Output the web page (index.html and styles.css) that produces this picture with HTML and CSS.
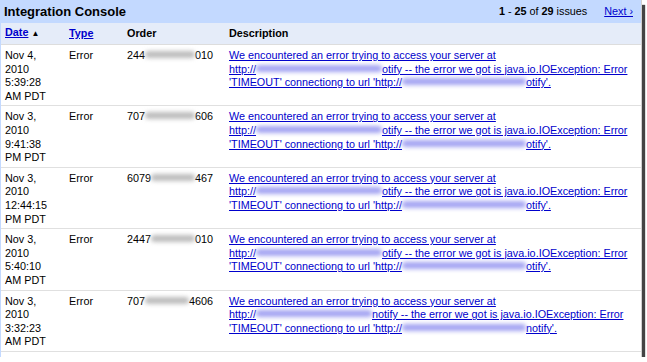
FILE: index.html
```html
<!DOCTYPE html>
<html>
<head>
<meta charset="utf-8">
<link rel="stylesheet" href="styles.css">
</head>
<body>
<div class="frame">
  <div class="titlebar">
    <div class="title">Integration Console</div>
    <div class="pager"><b>1</b> - <b>25</b> of <b>29</b> issues <a class="next" href="#">Next ›</a></div>
  </div>
  <table class="issues">
    <colgroup>
      <col class="c-date"><col class="c-type"><col class="c-order"><col class="c-desc">
    </colgroup>
    <thead>
      <tr>
        <th><a href="#">Date</a> <span class="arrow">▲</span></th>
        <th><a href="#">Type</a></th>
        <th>Order</th>
        <th>Description</th>
      </tr>
    </thead>
    <tbody>
      <tr>
        <td>Nov 4,<br>2010<br>5:39:28<br>AM PDT</td>
        <td>Error</td>
        <td>244<span class="blur-g"></span>010</td>
        <td><a href="#">We encountered an error trying to access your server at<br>http://<span class="blur-b w1"></span>otify -- the error we got is java.io.IOException: Error<br>'TIMEOUT' connectiong to url 'http://<span class="blur-b w2"></span>otify'.</a></td>
      </tr>
      <tr>
        <td>Nov 3,<br>2010<br>9:41:38<br>PM PDT</td>
        <td>Error</td>
        <td>707<span class="blur-g"></span>606</td>
        <td><a href="#">We encountered an error trying to access your server at<br>http://<span class="blur-b w1"></span>otify -- the error we got is java.io.IOException: Error<br>'TIMEOUT' connectiong to url 'http://<span class="blur-b w2"></span>otify'.</a></td>
      </tr>
      <tr>
        <td>Nov 3,<br>2010<br>12:44:15<br>PM PDT</td>
        <td>Error</td>
        <td>6079<span class="blur-g s"></span>467</td>
        <td><a href="#">We encountered an error trying to access your server at<br>http://<span class="blur-b w1"></span>otify -- the error we got is java.io.IOException: Error<br>'TIMEOUT' connectiong to url 'http://<span class="blur-b w2"></span>otify'.</a></td>
      </tr>
      <tr>
        <td>Nov 3,<br>2010<br>5:40:10<br>AM PDT</td>
        <td>Error</td>
        <td>2447<span class="blur-g s"></span>010</td>
        <td><a href="#">We encountered an error trying to access your server at<br>http://<span class="blur-b w1"></span>otify -- the error we got is java.io.IOException: Error<br>'TIMEOUT' connectiong to url 'http://<span class="blur-b w2"></span>otify'.</a></td>
      </tr>
      <tr>
        <td>Nov 3,<br>2010<br>3:32:23<br>AM PDT</td>
        <td>Error</td>
        <td>707<span class="blur-g s"></span>4606</td>
        <td><a href="#">We encountered an error trying to access your server at<br>http://<span class="blur-b w3"></span>notify -- the error we got is java.io.IOException: Error<br>'TIMEOUT' connectiong to url 'http://<span class="blur-b w2"></span>notify'.</a></td>
      </tr>
    </tbody>
  </table>
</div>
</body>
</html>
```
FILE: styles.css
```css
html, body {
  margin: 0;
  padding: 0;
  background: #ffffff;
}
body {
  font-family: Arial, "Liberation Sans", sans-serif;
  font-size: 10.8px;
  line-height: 13.6px;
  color: #000;
}
.frame {
  width: 642px;
  height: 357px;
  border-left: 1px solid #c3d9ff;
  border-right: 1px solid #d0d0d0;
  box-sizing: border-box;
  box-shadow: 4px 4px 1px -1px #444;
  background: #fff;
}
.titlebar {
  display: flex;
  align-items: center;
  justify-content: space-between;
  height: 23px;
  background: #c3d9ff;
  padding: 0 8px 0 3px;
}
.title {
  font-size: 13px;
  font-weight: bold;
}
.pager {
  font-size: 10.8px;
}
.next {
  margin-left: 14px;
}
a { color: #0000cc; }
.issues {
  width: 100%;
  border-collapse: collapse;
  table-layout: fixed;
}
.c-date { width: 64px; }
.c-type { width: 58px; }
.c-order { width: 102px; }
.issues th {
  background: #e5ecf9;
  text-align: left;
  font-weight: bold;
  height: 21px;
  padding: 0 0 0 4px;
  border-bottom: 1px solid #dddddd;
  vertical-align: middle;
}
.arrow {
  font-size: 8px;
}
.issues td {
  vertical-align: top;
  padding: 4px 0 2px 4px;
  border-bottom: 1px solid #e0e0e0;
  height: 54px;
  white-space: nowrap;
}
.blur-g, .blur-b {
  display: inline-block;
  height: 7px;
  vertical-align: 1px;
  filter: blur(2px);
  border-radius: 4px;
}
.blur-g {
  width: 50px;
  background: #bdbdbd;
}
.blur-g.s { width: 44px; }
.blur-b {
  background: #a4a4f2;
}
.w1 { width: 126px; }
.w2 { width: 124px; }
.w3 { width: 116px; }
```
